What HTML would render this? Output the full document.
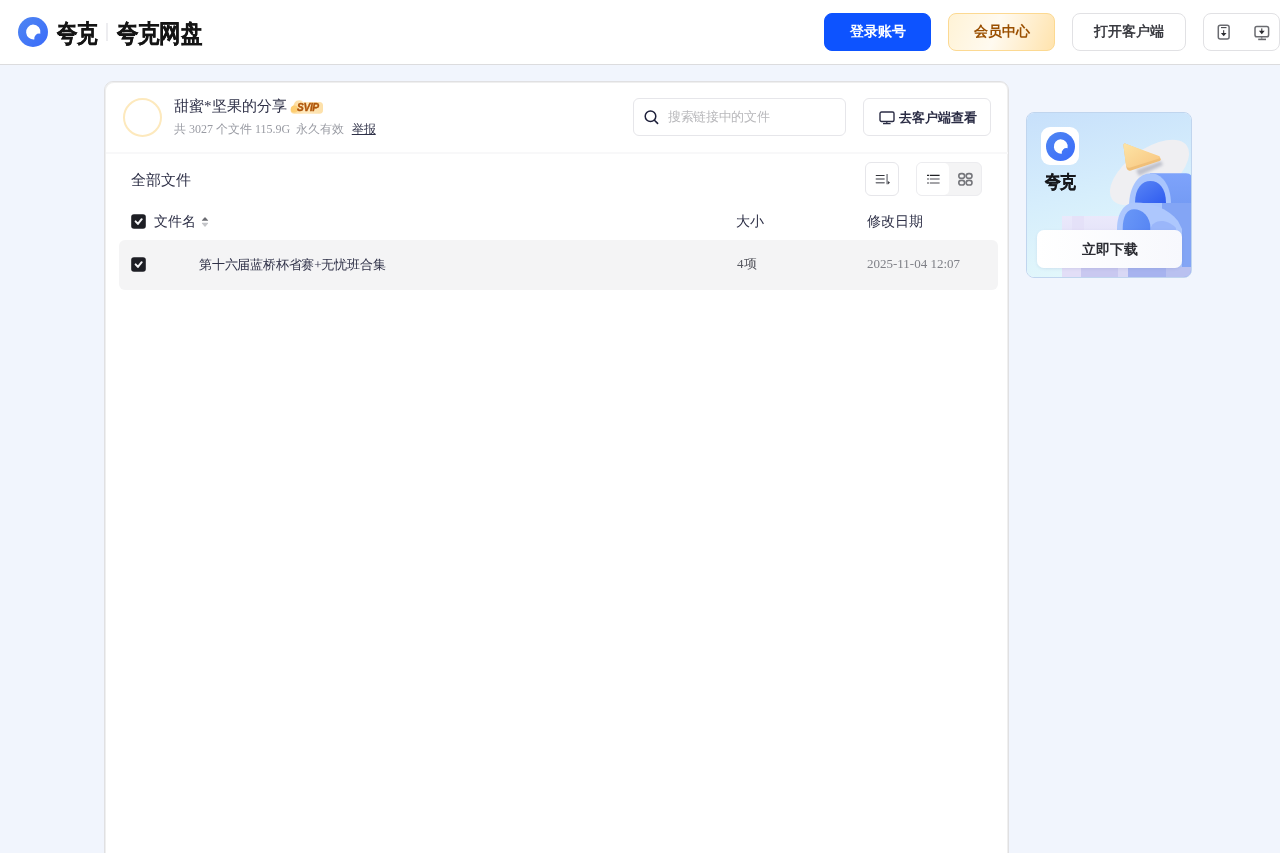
<!DOCTYPE html>
<html><head><meta charset="utf-8">
<style>
*{box-sizing:border-box;margin:0;padding:0}
html,body{width:1280px;height:853px;overflow:hidden}
body{background:#f1f5fd;font-family:"Liberation Serif",serif;color:#2e3047;position:relative}
.abs{position:absolute}
#card,#hdr,#side{will-change:transform}
#hdr{left:0;top:0;width:1280px;height:65px;background:#fff;border-bottom:1px solid #dcdcde}
.btn{position:absolute;top:13px;height:38px;border-radius:8px;font-size:14px;font-weight:bold;text-align:center;line-height:36px}
#b1{left:824px;width:107px;background:#0d53ff;color:#fff;border:1px solid #0d53ff}
#b2{left:948px;width:107px;background:linear-gradient(110deg,#fff3d6 0%,#fffaf0 45%,#ffe3ad 100%);border:1px solid #fcd992;color:#9a4f00}
#b3{left:1072px;width:114px;background:#fff;border:1px solid #e1e1e4;color:#3b3c42}
#b4{left:1203px;width:77px;background:#fff;border:1px solid #e1e1e4}
#card{left:104px;top:81px;width:905px;height:800px;background:#fff;border:1px solid #e0e0e2;border-radius:9px;box-shadow:inset 1px 1px 0 #efefef,inset -1px 0 0 #efefef}
#side{left:1026px;top:112px;width:166px;height:166px;border-radius:8px;overflow:hidden;border:1px solid #c0d5ee}
</style></head><body>
<div id="hdr" class="abs">
  <svg class="abs" style="left:18px;top:17px" width="30" height="30" viewBox="0 0 30 30">
    <defs><linearGradient id="lg" x1="0" y1="0" x2="1" y2="1"><stop offset="0" stop-color="#4f86f2"/><stop offset="1" stop-color="#3a6bfa"/></linearGradient></defs>
    <circle cx="15" cy="15" r="15" fill="url(#lg)"/>
    <path d="M15 7.5a7.5 7.5 0 0 1 7.3 9.2a5 5 0 0 0-6 5.8a7.5 7.5 0 1 1-1.3-15z" fill="#fff"/>
  </svg>
  <div class="abs" id="lg1" style="left:57px;top:16px;font-size:25px;font-weight:bold;color:#151515;line-height:36px;letter-spacing:-1px;transform:scaleX(0.82);transform-origin:0 0;-webkit-text-stroke:0.3px #151515">夸克</div>
  <div class="abs" style="left:106px;top:23px;width:2px;height:18px;background:#ededf0"></div>
  <div class="abs" id="lg2" style="left:117px;top:16px;font-size:25px;font-weight:bold;color:#151515;line-height:36px;letter-spacing:-0.3px;transform:scaleX(0.86);transform-origin:0 0;-webkit-text-stroke:0.3px #151515">夸克网盘</div>
  <div class="btn" id="b1">登录账号</div>
  <div class="btn" id="b2">会员中心</div>
  <div class="btn" id="b3">打开客户端</div>
  <div class="btn" id="b4">
    <svg class="abs" style="left:12px;top:9px" width="16" height="18" viewBox="0 0 16 18"><rect x="2.3" y="2.2" width="10.8" height="13.8" rx="2" fill="none" stroke="#6a6b70" stroke-width="1.5"/><path d="M5 4.6h5.5" stroke="#45464b" stroke-width="1.1"/><path d="M7.7 7.2v3" stroke="#2a2b30" stroke-width="1"/><path d="M4.9 9.9h5.6L7.7 13.3Z" fill="#2a2b30"/></svg>
    <svg class="abs" style="left:48px;top:10px" width="18" height="17" viewBox="0 0 18 17"><rect x="3" y="2.6" width="13.6" height="10.2" rx="1.8" fill="none" stroke="#6a6b70" stroke-width="1.5"/><path d="M9.8 12.8v2" stroke="#6a6b70" stroke-width="1"/><path d="M6.2 15.4h7.8" stroke="#6a6b70" stroke-width="1.6"/><path d="M9.8 4.4v2.8" stroke="#2a2b30" stroke-width="1"/><path d="M6.9 6.8h5.8L9.8 10.2Z" fill="#2a2b30"/></svg>
  </div>
</div>
<div id="card" class="abs">
<div class="abs" style="left:1px;top:0;width:903px;height:798px">
  <div class="abs" style="left:17px;top:16px;width:39px;height:39px;border-radius:50%;border:2px solid #fde9bd"></div>
  <div class="abs" id="title" style="left:68px;top:13px;font-size:15px;line-height:22px;color:#2e3047;white-space:nowrap">甜蜜*坚果的分享</div>
  <svg class="abs" id="svip" style="left:183px;top:17px" width="36" height="16" viewBox="0 0 36 16">
    <defs><linearGradient id="sv" x1="0" y1="0" x2="1" y2="0"><stop offset="0" stop-color="#fdd996"/><stop offset="0.45" stop-color="#fee9bf"/><stop offset="1" stop-color="#fde0a8"/></linearGradient></defs>
    <path d="M6 3 Q7.5 0.8 11 1.2 Q13 1.5 14 3 L30.5 3 Q34 3 34 6.5 L34 11 Q34 14.8 30.5 14.8 L5.5 14.8 Q1.6 14.8 1.6 11 Q1.6 8 4.2 6.8 Z" fill="url(#sv)"/>
    <circle cx="5.3" cy="10" r="3.6" fill="#fcc860" opacity="0.7"/>
    <text x="8" y="11.8" font-family="Liberation Sans" font-weight="bold" font-style="italic" font-size="10.2" fill="#b0560a" stroke="#b0560a" stroke-width="0.35" letter-spacing="-0.35">SVIP</text>
  </svg>
  <div class="abs" id="sub" style="left:68px;top:38px;font-size:12px;line-height:18px;color:#999ba3;white-space:nowrap">共 3027 个文件 115.9G &nbsp;永久有效 &nbsp;<span style="color:#2e3047;text-decoration:underline;margin-left:1.5px">举报</span></div>
  <div class="abs" id="search" style="left:527px;top:16px;width:213px;height:38px;border:1px solid #e6e6ea;border-radius:6px">
    <svg class="abs" style="left:10px;top:11px" width="16" height="16" viewBox="0 0 16 16"><circle cx="6.5" cy="6.3" r="5.3" fill="none" stroke="#1d1f3a" stroke-width="1.5"/><path d="M10.4 10.2L13.6 13.4" stroke="#1d1f3a" stroke-width="1.6" stroke-linecap="round"/></svg>
    <div class="abs" style="left:34px;top:8px;font-size:13px;line-height:20px;color:#b9b9bc;white-space:nowrap;letter-spacing:-0.35px">搜索链接中的文件</div>
  </div>
  <div class="abs" id="goc" style="left:757px;top:16px;width:128px;height:38px;border:1px solid #e6e6ea;border-radius:6px">
    <svg class="abs" style="left:15px;top:12px" width="16" height="14" viewBox="0 0 16 14"><rect x="1" y="1" width="14" height="9.5" rx="1.5" fill="none" stroke="#2b2d45" stroke-width="1.4"/><path d="M7.8 10.5v2" stroke="#2b2d45" stroke-width="1.2"/><path d="M4 12.6h7.6" stroke="#2b2d45" stroke-width="1.3"/></svg>
    <div class="abs" style="left:35px;top:9px;font-size:13px;line-height:20px;color:#2b2d45;font-weight:bold;white-space:nowrap">去客户端查看</div>
  </div>
  <div class="abs" style="left:0;top:70px;width:902px;height:2px;background:#f8f8f9"></div>
  <div class="abs" id="all" style="left:25px;top:88px;font-size:15px;line-height:20px;color:#2e3047">全部文件</div>
  <div class="abs" id="sortb" style="left:759px;top:80px;width:34px;height:34px;border:1px solid #e6e6ea;border-radius:6px">
    <svg class="abs" style="left:9px;top:10px" width="16" height="14" viewBox="0 0 16 14"><path d="M1.3 2.5h7.8" stroke="#34353b" stroke-width="1.2" stroke-linecap="round"/><path d="M1.3 6h7.8M1.3 9.8h7.8" stroke="#75767c" stroke-width="1.5" stroke-linecap="round"/><path d="M12.1 1v10.3" stroke="#8e8f95" stroke-width="1.6"/><path d="M12.9 8v3.6L15 9.6Z" fill="#3b3c42"/></svg>
  </div>
  <div class="abs" id="viewb" style="left:810px;top:80px;width:66px;height:34px;border:1px solid #ececef;border-radius:6px;background:#f4f4f5">
    <div class="abs" style="left:0;top:0;width:32px;height:32px;border-radius:5px;background:#fff"></div>
    <svg class="abs" style="left:9px;top:10px" width="16" height="14" viewBox="0 0 16 14"><path d="M1 2.4h2M3.8 2.4h9.8" stroke="#1f2025" stroke-width="1.2"/><path d="M1 6.1h2M3.8 6.1h9.8M1 9.9h2M3.8 9.9h9.8" stroke="#86878c" stroke-width="1.5"/></svg>
    <svg class="abs" style="left:40px;top:9px" width="17" height="15" viewBox="0 0 17 15"><rect x="1.8" y="1.6" width="5.8" height="4.6" rx="2.3" fill="none" stroke="#75767b" stroke-width="1.6"/><rect x="9.2" y="1.6" width="5.8" height="4.6" rx="2.3" fill="none" stroke="#75767b" stroke-width="1.6"/><rect x="1.8" y="8.4" width="5.8" height="4.6" rx="2.3" fill="none" stroke="#75767b" stroke-width="1.6"/><rect x="9.2" y="8.4" width="5.8" height="4.6" rx="2.3" fill="none" stroke="#75767b" stroke-width="1.6"/></svg>
  </div>
  <div class="abs" style="left:25px;top:132px"><svg width="15" height="15" viewBox="0 0 15 15" style="display:block"><rect x="0.2" y="0.2" width="14.6" height="14.6" rx="2.8" fill="#1d1e24"/><path d="M4.6 7.4L6.9 9.9L10.7 5.2" fill="none" stroke="#f4f4f6" stroke-width="2" stroke-linecap="round" stroke-linejoin="round"/></svg></div>
  <svg class="abs" style="left:95px;top:133px" width="8" height="14" viewBox="0 0 8 14"><path d="M1.2 5.8Q0.6 5.8 1 5.2L3.5 2.4Q4 1.9 4.5 2.4L7 5.2Q7.4 5.8 6.8 5.8Z" fill="#6b6c72"/><path d="M1.2 7.8Q0.6 7.8 1 8.4L3.5 11.4Q4 11.9 4.5 11.4L7 8.4Q7.4 7.8 6.8 7.8Z" fill="#c4c5c9"/></svg>
  <div class="abs" id="hname" style="left:48px;top:130px;font-size:14px;line-height:20px;color:#2e3047">文件名</div>
  <div class="abs" id="hsize" style="left:630px;top:130px;font-size:14px;line-height:20px;color:#2e3047">大小</div>
  <div class="abs" id="hdate" style="left:761px;top:130px;font-size:14px;line-height:20px;color:#2e3047">修改日期</div>
  <div class="abs" id="row" style="left:13px;top:158px;width:879px;height:50px;border-radius:6px;background:#f4f4f5"></div>
  <div class="abs" style="left:25px;top:175px"><svg width="15" height="15" viewBox="0 0 15 15" style="display:block"><rect x="0.2" y="0.2" width="14.6" height="14.6" rx="2.8" fill="#1d1e24"/><path d="M4.6 7.4L6.9 9.9L10.7 5.2" fill="none" stroke="#f4f4f6" stroke-width="2" stroke-linecap="round" stroke-linejoin="round"/></svg></div>
  <div class="abs" id="fname" style="left:93px;top:174px;font-size:13px;letter-spacing:-0.2px;line-height:18px;color:#2e3047;white-space:nowrap">第十六届蓝桥杯省赛+无忧班合集</div>
  <div class="abs" id="fsize" style="left:631px;top:173px;font-size:13px;line-height:18px;color:#55565e">4项</div>
  <div class="abs" id="fdate" style="left:761px;top:173px;font-size:13px;line-height:18px;color:#7f8087;white-space:nowrap">2025-11-04 12:07</div>
</div>
</div>
<div id="side" class="abs">
  <svg class="abs" style="left:-1px;top:-1px" width="166" height="166" viewBox="0 0 166 166">
    <defs>
      <filter id="blur1" x="-50%" y="-50%" width="200%" height="200%"><feGaussianBlur stdDeviation="1.6"/></filter>
      <linearGradient id="sbg" x1="0" y1="0" x2="0.25" y2="1"><stop offset="0" stop-color="#c7e0fb"/><stop offset="0.55" stop-color="#d6eefc"/><stop offset="1" stop-color="#e2f7fb"/></linearGradient>
      <linearGradient id="tri" x1="0" y1="0" x2="1" y2="1"><stop offset="0" stop-color="#fde4a6"/><stop offset="1" stop-color="#f8c57f"/></linearGradient>
      <linearGradient id="blk" x1="0" y1="0" x2="0" y2="1"><stop offset="0" stop-color="#7ea3fb"/><stop offset="0.55" stop-color="#6b94ef"/><stop offset="1" stop-color="#a7b6ee"/></linearGradient>
      <linearGradient id="hole" x1="0" y1="0" x2="1" y2="1"><stop offset="0" stop-color="#5a86f5"/><stop offset="1" stop-color="#2f5cf0"/></linearGradient>
      <linearGradient id="hole2" x1="0" y1="0" x2="1" y2="1"><stop offset="0" stop-color="#6a98f7"/><stop offset="1" stop-color="#4d7cf2"/></linearGradient>
      <linearGradient id="pur" x1="0" y1="0" x2="0" y2="1"><stop offset="0" stop-color="#ece8fb"/><stop offset="1" stop-color="#d7d3f3"/></linearGradient>
    </defs>
    <rect width="166" height="166" fill="url(#sbg)"/>
    <rect x="36" y="104" width="58" height="62" fill="url(#pur)" opacity="0.9"/>
    <rect x="46" y="104" width="12" height="62" fill="#e3def7" opacity="0.7"/>
    <ellipse cx="123.5" cy="60.5" rx="46" ry="23" transform="rotate(-36 123.5 60.5)" fill="#efeff2"/>
        <path d="M110 58 L135 49 L137 53 L113 64 Z" fill="#9fa2b3" opacity="0.6" filter="url(#blur1)"/>
    <path d="M99 31.5 Q97 31 97.5 34 L100.5 56 Q101.5 59.5 105 58.5 L133.5 49 Q136.5 47.5 133 45 Z" fill="#f0bf78"/>
    <path d="M99 31.5 Q97 31 97.5 34 L100 53.5 Q101 56.5 104.5 55.5 L133 46.5 Q135.5 45.5 133 44 Z" fill="url(#tri)"/>
    <path d="M124 61.3 L160 61.3 Q166 61.3 166 67 L166 166 L124 166 Z" fill="url(#blk)"/>
    <path d="M103 166 L103 95 C103 72 114 61.3 124.5 61.3 C135 61.3 145 72 145 92 L145 166 Z" fill="#a9c5fd"/>
    <path d="M109 91 C109 76 116 69 124.5 69 C133 69 140 76 140 91 Z" fill="url(#hole)"/>
    <path d="M136 91 L166 91 L166 166 L136 166 Z" fill="#83a5f5"/>
    <path d="M91 166 L91 117 C91 100 99 90.5 109 90.5 C125 90.5 142 96 152 109 L156 117 L156 166 Z" fill="#adc7fd"/>
    <path d="M96.7 166 L96.7 117 C96.7 104 101 97.3 108 97.3 C116 97.3 124.5 104 124.5 117 L124.5 166 Z" fill="url(#hole2)"/>
    <path d="M124.5 117 C126 108 140 105 150 116 L150 166 L124.5 166 Z" fill="#98b4f9" opacity="0.9"/>
    <rect x="36" y="155" width="19" height="11" fill="#e2def7"/>
    <rect x="55" y="155" width="37" height="11" fill="#c9c8f0"/>
    <rect x="92" y="155" width="10" height="11" fill="#d9d8f5"/>
    <rect x="102" y="155" width="38" height="11" fill="#a7b3ef"/>
    <rect x="140" y="155" width="26" height="11" fill="#b9c1f0"/>
  </svg>
  <div class="abs" style="left:14px;top:14px;width:38px;height:38px;border-radius:9px;background:#fff">
    <svg class="abs" style="left:4.5px;top:5px" width="29" height="29" viewBox="0 0 30 30">
      <circle cx="15" cy="15" r="15" fill="url(#lg)"/>
      <path d="M15 7.5a7.5 7.5 0 0 1 7.3 9.2a5 5 0 0 0-6 5.8a7.5 7.5 0 1 1-1.3-15z" fill="#fff"/>
    </svg>
  </div>
  <div class="abs" style="left:18px;top:57px;font-size:18px;line-height:24px;font-weight:bold;color:#17181c;letter-spacing:-0.5px;transform:scaleX(0.88);transform-origin:0 0;-webkit-text-stroke:0.3px #17181c">夸克</div>
  <div class="abs" style="left:10px;top:117px;width:145px;height:38px;padding-top:1px;border-radius:7px;background:linear-gradient(90deg,#ffffff,#f7f8fd);box-shadow:0 1px 3px rgba(80,100,160,0.12);text-align:center;line-height:38px;font-size:14px;font-weight:bold;color:#2b2c33">立即下载</div>
</div>
</body></html>
